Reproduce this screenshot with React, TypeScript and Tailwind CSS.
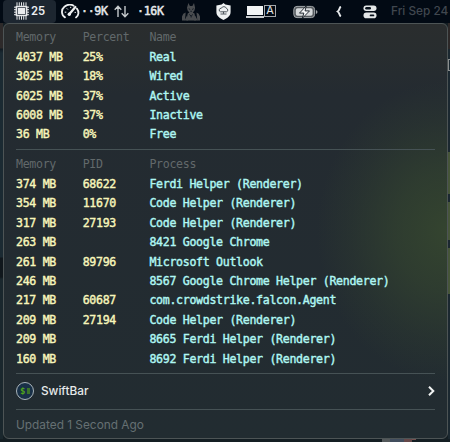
import type { ReactNode } from "react";

const summary = [
  ["4037 MB", "25%", "Real"],
  ["3025 MB", "18%", "Wired"],
  ["6025 MB", "37%", "Active"],
  ["6008 MB", "37%", "Inactive"],
  ["36 MB", "0%", "Free"],
];

const processes = [
  ["374 MB", "68622", "Ferdi Helper (Renderer)"],
  ["354 MB", "11670", "Code Helper (Renderer)"],
  ["317 MB", "27193", "Code Helper (Renderer)"],
  ["263 MB", "", "8421 Google Chrome"],
  ["261 MB", "89796", "Microsoft Outlook"],
  ["246 MB", "", "8567 Google Chrome Helper (Renderer)"],
  ["217 MB", "60687", "com.crowdstrike.falcon.Agent"],
  ["209 MB", "27194", "Code Helper (Renderer)"],
  ["209 MB", "", "8665 Ferdi Helper (Renderer)"],
  ["160 MB", "", "8692 Ferdi Helper (Renderer)"],
];

function Row({ cells, head = false }: { cells: string[]; head?: boolean }) {
  return (
    <div
      className={`grid h-[19.45px] grid-cols-[66.7px_66.7px_1fr] items-center whitespace-pre font-['DejaVu_Sans_Mono',monospace] text-[11.6px] leading-none tracking-[-0.313px] ${
        head ? "text-[#62696b]" : "[-webkit-text-stroke-width:0.4px]"
      }`}
    >
      <span className={head ? "" : "text-[#f8f6bb]"}>{cells[0]}</span>
      <span className={head ? "" : "text-[#f8f6bb]"}>{cells[1]}</span>
      <span className={head ? "" : "text-[#b0f7f3]"}>{cells[2]}</span>
    </div>
  );
}

function Divider({ className }: { className: string }) {
  return <div className={`h-px shrink-0 bg-[#465255] ${className}`} />;
}

function Mono({ children }: { children: ReactNode }) {
  return (
    <span className="whitespace-pre pt-px font-['DejaVu_Sans_Mono',monospace] text-[11.6px] leading-none tracking-[-0.313px] text-[#e4e7e9] [-webkit-text-stroke-width:0.5px]">
      {children}
    </span>
  );
}

function ChipIcon() {
  return (
    <svg width="15" height="18" viewBox="0 0 15 18" fill="none" stroke="#e8eaec">
      <path d="M3 .3v3.5M5.3 .3v3.5M7.5 .3v3.5M9.7 .3v3.5M12 .3v3.5M3 14.2v3.5M5.3 14.2v3.5M7.5 14.2v3.5M9.7 14.2v3.5M12 14.2v3.5" />
      <path d="M0 5.2h2M0 7.7h2M0 10.2h2M0 12.7h2M13 5.2h2M13 7.7h2M13 10.2h2M13 12.7h2" />
      <rect x="1.6" y="3.7" width="11.8" height="10.6" rx="1" fill="#e8eaec" stroke="none" />
      <rect x="3.6" y="5.6" width="7.8" height="6.8" stroke="#38404a" strokeWidth=".8" />
    </svg>
  );
}

function GaugeIcon() {
  return (
    <svg width="19" height="15" viewBox="0 0 19 15" fill="none" stroke="#eef0f1" strokeLinecap="round">
      <path d="M4 13.4C.2 11.2-.1 5.6 3.4 2.8 6.3.4 10 .3 12.6 1.7" strokeWidth="1.8" />
      <path d="M15.9 4.6c2.4 3 2 6.9-.9 8.8" strokeWidth="1.8" />
      <path d="M8.2 10.2 14.4 3" strokeWidth="2.3" />
      <circle cx="8.3" cy="10.2" r="1.7" fill="#eef0f1" stroke="none" />
      <path d="M4.1 8.2h.8M6 4.6l.6.6M9.7 3.2v.5M14 8.4h.5" strokeWidth="1" />
    </svg>
  );
}

function ArrowsIcon() {
  return (
    <svg width="15" height="13" viewBox="0 0 15 13" fill="none" stroke="#c5cacd" strokeWidth="1.4">
      <path d="M4 12V1.4M.7 4.7 4 1.3l3.3 3.4M11 1v10.6M7.7 8.3 11 11.7l3.3-3.4" />
    </svg>
  );
}

function FoxIcon() {
  return (
    <svg width="18" height="18" viewBox="0 0 18 18">
      <g fill="#494c4f">
        <path d="M6.4 0 7.9 3.1h2.5L12 0l1.1 4.8-.6 2.6-1.7 2.2 1.7 1 1.3 6.9H4.4l1.3-6.9 1.7-1L5.6 7.4 5 4.8z" />
        <path d="M3.7 9.5 2.9 17.5H0v-4l1.3-2.8zM14.5 9.5l.8 8H18v-4l-1.3-2.8z" />
        <path d="M2.5 17.5 5 12.5l1 5zM15.7 17.5 13.2 12.5l-1 5z" />
      </g>
      <path d="m6.7 5.7 1.5.8M11.6 5.7l-1.5.8M8.4 8.3h1.5M7.3 11.5l1.8 1.5 1.8-1.5M9.1 13v1.5" stroke="#07101a" strokeWidth=".8" fill="none" />
    </svg>
  );
}

function ShieldIcon() {
  return (
    <svg width="15" height="17" viewBox="0 0 15 17" fill="none">
      <path d="M7.5 0 9.3 1.4 14.6 2.5V9c0 4-3.3 6.1-7.1 8C3.7 15.1.4 13 .4 9V2.5L5.7 1.4z" fill="#eef1f2" />
      <path d="M4.5 8.8h6a1.7 1.7 0 0 0 0-3.3 2.8 2.8 0 0 0-5.2-.2 1.8 1.8 0 0 0-.8 3.5zM7.5 8.8v2M4.5 11h6" stroke="#3c454d" strokeWidth=".9" />
    </svg>
  );
}

function BatteryIcon() {
  return (
    <svg width="25" height="14" viewBox="0 0 25 14" fill="none">
      <rect x=".8" y="1.4" width="20.8" height="11.2" rx="3.2" fill="#555a5e" stroke="#a2a6a9" />
      <rect x="2.8" y="3.2" width="16.8" height="7.6" rx="1.8" fill="#d5d8da" />
      <path d="M22.9 5v4q1.6-.6 1.6-2t-1.6-2" fill="#a2a6a9" />
      <path d="m13.2.9-6.7 7.2h4.3l-1.3 5 7-7.2h-4.4z" fill="#f6f7f8" stroke="#10171f" strokeWidth=".9" />
    </svg>
  );
}

function ControlIcon() {
  return (
    <svg width="14" height="14" viewBox="0 0 14 14" fill="none">
      <rect x=".5" y=".6" width="13" height="5.4" rx="2.7" fill="#e4e7e8" />
      <path d="M3.4 3.3h3.4" stroke="#07101a" strokeWidth="2.4" strokeLinecap="round" />
      <rect x=".5" y="7.6" width="13" height="5.6" rx="2.8" fill="#e4e7e8" />
      <path d="M7.6 10.4h2.8" stroke="#07101a" strokeWidth="1.8" strokeLinecap="round" />
    </svg>
  );
}

function MenuBar() {
  return (
    <header className="grid h-[23px] shrink-0 grid-cols-[3px_53px_5px_20px_33px_23px_45px_34px_30px_47px_43px_27px_28px_1fr] items-center overflow-hidden bg-[#020a14] pb-px">
      <span />
      <div className="flex h-[23px] items-center gap-[2px] rounded-[4px] bg-[#1d2630] pb-px pl-[11px] font-['Inter',sans-serif] text-[11.3px] leading-none font-semibold text-[#eceef0]">
        <ChipIcon />
        <span className="pt-px">25</span>
      </div>
      <span />
      <GaugeIcon />
      <Mono>··9K</Mono>
      <ArrowsIcon />
      <Mono>·16K</Mono>
      <FoxIcon />
      <ShieldIcon />
      <div className="flex items-start pb-px">
        <div className="w-[18px] pt-px">
          <div className="ml-px h-[9px] w-[16px] bg-[#f2f4f5]" />
          <div className="mt-px h-[2px] bg-[#c9cccf]" />
        </div>
        <div className="flex h-3 w-[12px] items-center justify-center border border-[#a4a8ac] font-['Inter',sans-serif] text-[11px] leading-none text-[#e5e8ea]">
          A
        </div>
      </div>
      <BatteryIcon />
      <svg width="6" height="11" viewBox="0 0 6 11" fill="none" stroke="#e6e9eb" strokeWidth="1.9">
        <path d="M4.8 .5C3.3 1.7 3.5 4.3 1.7 5.5 3.5 6.7 3.3 9.3 4.8 10.5" />
      </svg>
      <ControlIcon />
      <span className="whitespace-nowrap pt-px font-['Inter',sans-serif] text-[11.8px] leading-none font-medium text-[#40474f]">
        Fri Sep 24
      </span>
    </header>
  );
}

export default function App() {
  return (
    <div className="flex h-[442px] w-[450px] flex-col overflow-hidden bg-[#141e23]">
      <MenuBar />
      <div className="flex h-[416px]">
        <div className="w-[3px] shrink-0 bg-[linear-gradient(#2d2a2a_0px,#2d2a2a_25px,#101a21_26px,#1b2a32_30px,#1b2a32_234px,#10171c_235px,#10171c_254px,#1a272d_256px)]" />
        <main className="flex w-[445px] shrink-0 flex-col rounded-[6px] border border-[#4d5455] bg-[radial-gradient(ellipse_130px_150px_at_100%_50%,#34442f_0%,#33432fb0_40%,#33432f40_75%,#33432f00_100%),linear-gradient(#2a2d2e_0px,#282d2f_30px,#242b31_70px,#222c31_100%)] px-3 pt-[4.3px]">
          <Row head cells={["Memory", "Percent", "Name"]} />
          {summary.map((cells) => (
            <Row key={cells[2]} cells={cells} />
          ))}
          <Divider className="mt-[4.2px] mb-[5.4px]" />
          <Row head cells={["Memory", "PID", "Process"]} />
          {processes.map((cells, i) => (
            <Row key={i} cells={cells} />
          ))}
          <Divider className="mt-[3.9px]" />
          <div className="flex h-[34.4px] items-center">
            <div className="flex size-[18px] items-center justify-center gap-[1.5px] rounded-full border border-[#a9b4ba] bg-[#183047] font-['DejaVu_Sans_Mono',monospace] text-[9px] leading-none font-bold text-[#4fa31b]">
              <span>$</span>
              <span className="h-[6px] w-[3px] bg-[#3b7529]" />
            </div>
            <span className="ml-[7px] flex-1 font-['Inter',sans-serif] text-[11.8px] leading-none font-medium text-[#e6eaea]">
              SwiftBar
            </span>
            <svg width="7" height="10" viewBox="0 0 7 10" fill="none" stroke="#f1f3f3" strokeWidth="2">
              <path d="m1 .8 4.3 4.2L1 9.2" />
            </svg>
          </div>
          <Divider className="" />
          <div className="flex flex-1 items-center pt-[4px] font-['Inter',sans-serif] text-[11.85px] leading-none text-[#667073]">
            Updated 1 Second Ago
          </div>
        </main>
        <div className="flex w-[2px] shrink-0 flex-col bg-[#1b2830]">
          <span className="h-[26px] bg-[#2c2828]" />
          <span className="mt-[10px] h-3 border-y border-l border-[#8a8e8f]" />
          <span className="mt-[81px] h-[42px] bg-[#465539]" />
          <span className="mt-2 h-[38px] bg-[#465539]" />
          <span className="mt-2 h-[46px] bg-[#465539]" />
        </div>
      </div>
      <div className="flex flex-1 pl-[382px]">
        <span className="h-full w-2 bg-[#53585a]" />
        <span className="h-full w-[14px] bg-[#414d5d]" />
        <span className="h-full w-2 bg-[#654849]" />
        <span className="h-px w-1 bg-[#74514f]" />
      </div>
    </div>
  );
}
